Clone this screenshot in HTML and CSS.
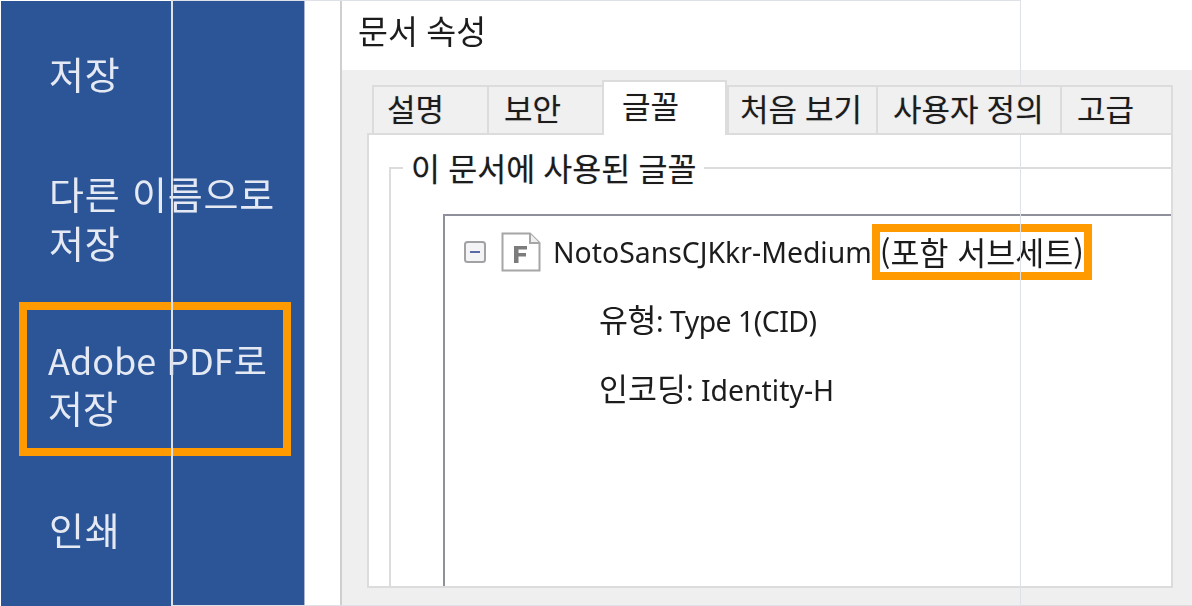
FILE: index.html
```html
<!DOCTYPE html>
<html lang="ko">
<head>
<meta charset="utf-8">
<title>문서 속성</title>
<link rel="stylesheet" href="styles.css">
</head>
<body>
<div class="page">
  <nav class="sidebar">
    <div class="nav-item first">저장</div>
    <div class="nav-item second">다른 이름으로<br>저장</div>
    <div class="nav-item marked"><div class="marked-text">Adobe PDF로<br><span class="nav-ko">저장</span></div></div>
    <div class="nav-item last">인쇄</div>
  </nav>
  <main class="dialog">
    <h1 class="title">문서 속성</h1>
    <section class="body">
      <div class="tabs">
        <div class="tab t1">설명</div>
        <div class="tab t2">보안</div>
        <div class="tab active">글꼴</div>
        <div class="tab t4">처음 보기</div>
        <div class="tab t5">사용자 정의</div>
        <div class="tab t6">고급</div>
      </div>
      <div class="panel">
        <div class="group">
          <div class="legend">이 문서에 사용된 글꼴</div>
          <div class="tree">
            <div class="row font-row">
              <svg class="minus" viewBox="0 0 22 22"><rect x="1" y="1" width="20" height="20" rx="2.5" fill="#f4f4f6" stroke="#a2a2a4" stroke-width="2"/><path d="M6 11h10" stroke="#5a6aa8" stroke-width="2"/></svg>
              <svg class="doc" viewBox="0 0 40 40"><path d="M1.500 1.500H29L38.500 11V38.500H1.500Z" fill="#fff" stroke="#a6a6a6" stroke-width="2"/><path d="M29 1.500V11H38.500" fill="#efefef" stroke="#a6a6a6" stroke-width="2"/><path d="M13 31V14H26V17.500H17.500V21H25V24.500H17.500V31Z" fill="#7c7c7c"/></svg>
              <span class="name blurred">NotoSansCJKkr-Medium</span><span class="subset"><span class="ko blurred">(포함 서브세트)</span></span>
            </div>
            <div class="row info type-row"><span class="blurred"><span class="ko">유형</span>: Type 1(CID)</span></div>
            <div class="row info"><span class="blurred"><span class="ko">인코딩</span>: Identity-H</span></div>
          </div>
        </div>
      </div>
    </section>
  </main>
  <div class="frame"></div>
</div>
</body>
</html>
```
FILE: styles.css
```css
* { box-sizing: border-box; }
html, body { margin: 0; padding: 0; background: #fff; }
body { font-family: "Noto Sans", "Noto Sans CJK KR", sans-serif; }
.page { position: relative; display: flex; width: 1192px; height: 606px; overflow: hidden; }

.sidebar { width: 304px; height: 605px; margin: 1px 0 0 1px; background: #2b5597; color: #e4e9f3; font-size: 38px; flex: none; border-right: 1px solid #a9b6cf; }
.sidebar, .sidebar * { font-family: "Noto Sans CJK KR", "Noto Sans", sans-serif; }
.nav-item { padding-left: 48px; line-height: 49px; letter-spacing: .8px; }
.first, .second, .last { filter: blur(.6px); }
.first { margin-top: 48px; line-height: 48px; }
.second { margin-top: 71px; }
.marked { margin: 36px 13px 0 18px; padding: 25px 0 0 21px; height: 154px; border: 8px solid #ff9a00; line-height: 48px; font-size: 36px; letter-spacing: 0; }
.marked-text { filter: blur(.6px); }
.nav-ko { font-size: 38px; }
.last { margin-top: 49px; line-height: 48px; }

.dialog { flex: 1; margin-left: 35px; display: flex; flex-direction: column; border-left: 2px solid #cfcfcf; }
.title { margin: 0; height: 70px; padding: 9px 0 0 16px; font-size: 32.500px; font-weight: 400; line-height: 46px; color: #1c1c1c; filter: blur(.5px); }
.body { flex: 1; background: #efefef; padding: 10px 19px 15px 25px; border-bottom: 1px solid #dcdcdc; }

.tabs { display: flex; height: 55px; align-items: flex-end; padding-left: 5px; margin-bottom: -2px; position: relative; z-index: 1; }
.tab { height: 50px; border: 2px solid #dcdcdc; border-right-width: 0; background: #f0f0f0; font-size: 31px; line-height: 44px; color: #1c1c1c; padding-left: 15px; white-space: nowrap; }
.t1, .t2 { width: 115px; }
.t1 { padding-left: 13px; }
.t4 { width: 149px; padding-left: 11px; }
.t5 { width: 184px; }
.t6 { width: 113px; border-right-width: 2px; }
.active { width: 125px; height: 55px; background: #fff; border-width: 2px 2px 0; line-height: 48px; position: relative; z-index: 2; padding-left: 18px; }

.panel { height: 455px; background: #fff; border: 2px solid #dcdcdc; padding: 32px 0 0 20px; overflow: hidden; }
.group { position: relative; height: 419px; border: solid #dcdcdc; border-width: 2px 0 0 2px; padding: 45px 0 0 52px; }
.legend { position: absolute; left: 12px; top: -18px; padding: 0 8px; background: #fff; font-size: 31.500px; line-height: 36px; color: #1c1c1c; }
.tree { height: 374px; border: solid #8e909c; border-width: 2px 0 0 2px; color: #1c1c1c; font-size: 28.400px; }
.row { display: flex; align-items: center; height: 40px; line-height: 40px; white-space: nowrap; }
.font-row { margin-top: 16px; padding-left: 19px; }
.minus { width: 22px; height: 22px; flex: none; margin-right: 15px; }
.doc { width: 40px; height: 40px; flex: none; margin-right: 12px; }
.ko { font-family: "Noto Sans CJK KR", sans-serif; font-size: 31.500px; }
.blurred { display: inline-block; filter: blur(.5px); }
.subset { margin-left: 8px; outline: 8px solid #ff9a00; height: 40px; line-height: 38px; }
.info { padding-left: 154px; margin-top: 29px; }
.type-row { margin-top: 27px; letter-spacing: -.5px; }

.tab, .legend { text-shadow: 0 0 1px rgba(40,40,40,.35); }

.frame { position: absolute; left: 171px; top: 0; width: 850px; height: 606px; border: 1px solid #dfe1e8; border-left-width: 2px; pointer-events: none; }
```
